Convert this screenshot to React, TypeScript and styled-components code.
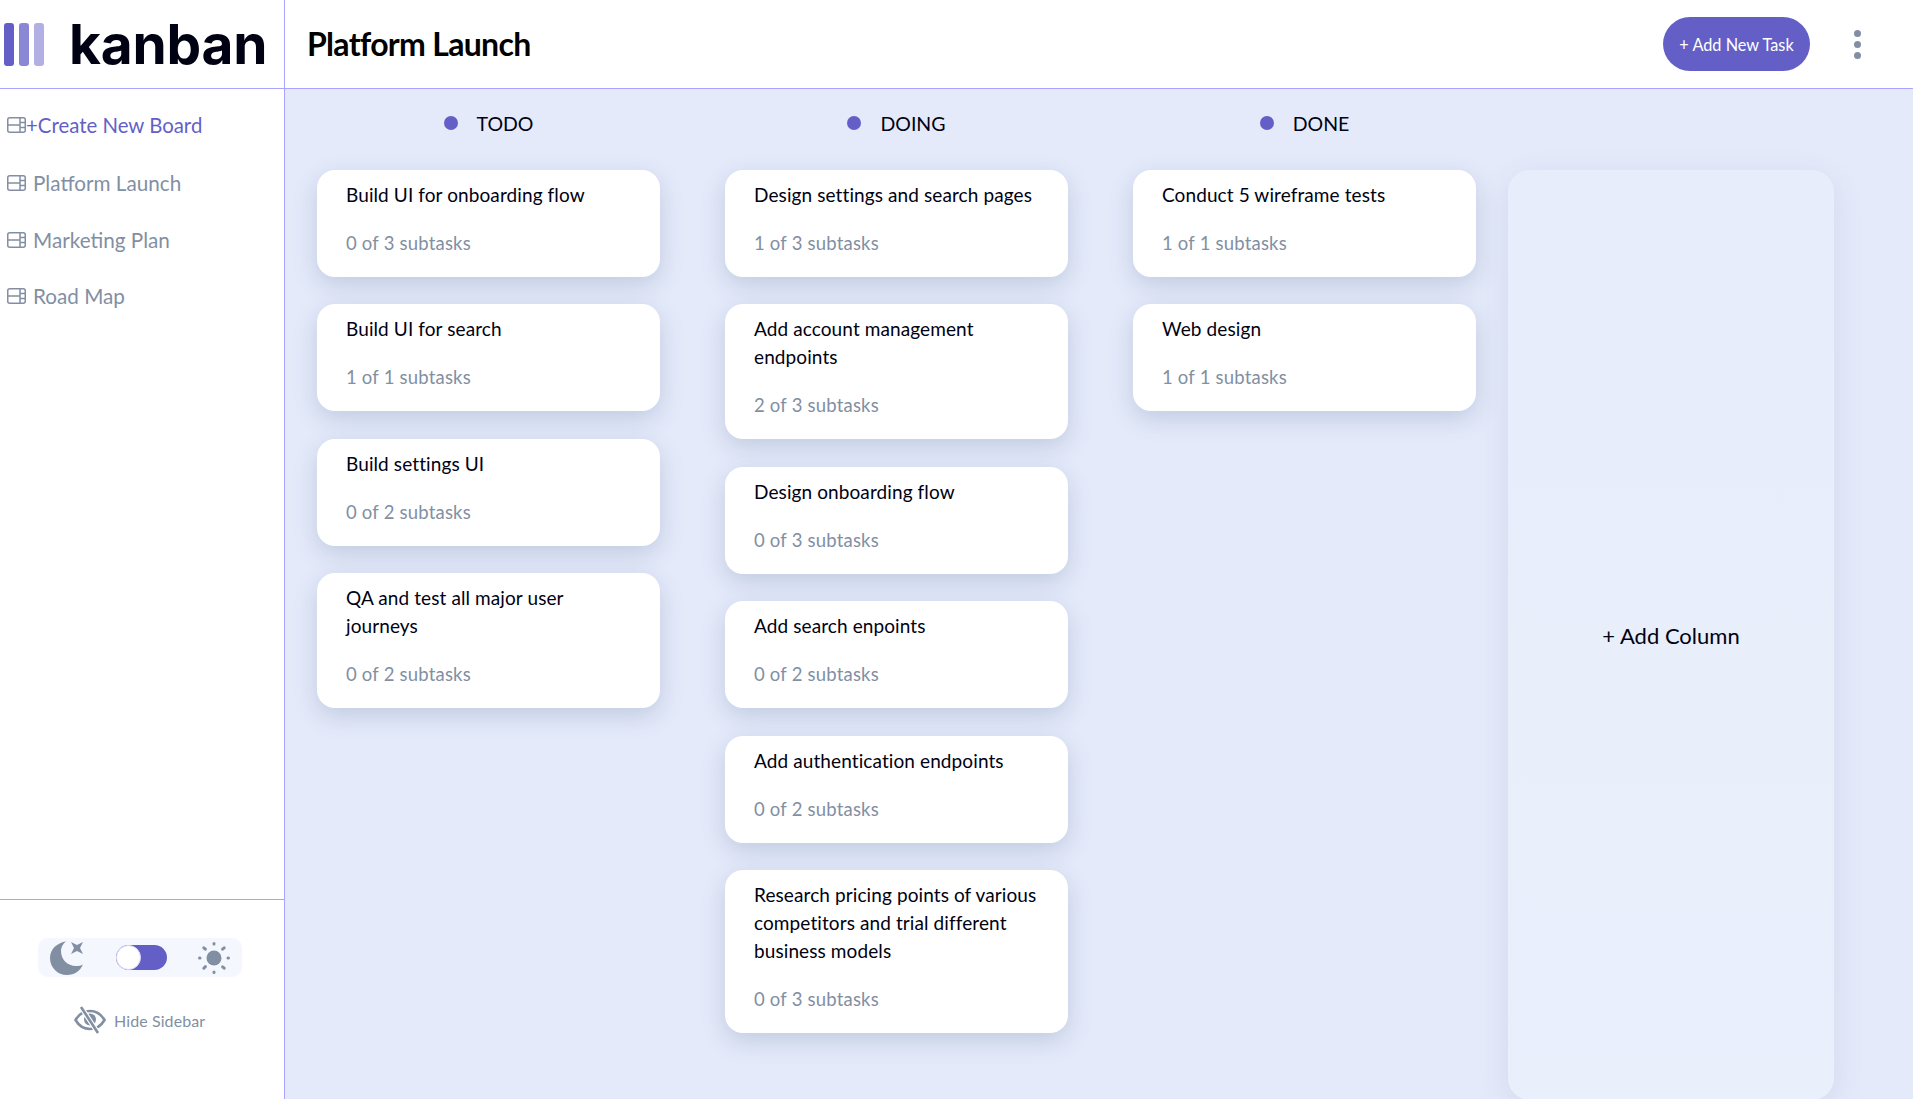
import React from "react";
import styled, { createGlobalStyle } from "styled-components";

const Global = createGlobalStyle`
  html, body { margin: 0; padding: 0; height: 100%; }
  body { font-family: "Lato", "Liberation Sans", sans-serif; color: #000112; background: #e4eafa; }
  * { box-sizing: border-box; }
`;

const Shell = styled.div`
  display: flex;
  flex-direction: column;
  height: 100vh;
  overflow: hidden;
`;
const TopBar = styled.header`
  display: flex;
  flex: 0 0 89px;
  background: #fff;
  border-bottom: 1px solid #a8a4ff;
`;
const LogoCell = styled.div`
  flex: 0 0 285px;
  display: flex;
  align-items: center;
  gap: 25px;
  padding-left: 4px;
  border-right: 1px solid #a8a4ff;
`;
const LogoBars = styled.div`
  display: flex;
  gap: 5px;
`;
const LogoBar = styled.span<{ $o: number }>`
  width: 10px;
  height: 43px;
  border-radius: 3px;
  background: #635fc7;
  opacity: ${(p) => p.$o};
`;
const LogoText = styled.span`
  font-family: "Inter", sans-serif;
  font-weight: 700;
  font-size: 55px;
  line-height: 1;
  letter-spacing: -0.2px;
  color: #000112;
`;
const TitleBar = styled.div`
  flex: 1;
  display: flex;
  align-items: center;
  padding: 0 52px 0 22px;
`;
const Title = styled.h1`
  flex: 1;
  margin: 0 0 2px;
  font-size: 32px;
  font-weight: 700;
  letter-spacing: -0.7px;
  color: #000;
`;
const AddTask = styled.button`
  width: 147px;
  height: 54px;
  padding: 0;
  border: 0;
  border-radius: 27px;
  background: #635fc7;
  color: #fff;
  font-family: inherit;
  font-size: 16.3px;
  margin-right: 44px;
`;
const Kebab = styled.div`
  display: flex;
  flex-direction: column;
  gap: 4px;
`;
const KebabDot = styled.span`
  width: 7px;
  height: 7px;
  border-radius: 50%;
  background: #828fa3;
`;
const Body = styled.div`
  flex: 1;
  display: flex;
  min-height: 0;
`;
const Sidebar = styled.aside`
  flex: 0 0 285px;
  display: flex;
  flex-direction: column;
  background: #fff;
  border-right: 1px solid #a8a4ff;
`;
const Nav = styled.nav`
  flex: 1;
  display: flex;
  flex-direction: column;
  gap: 27.6px;
  padding: 21.5px 0 0 7px;
`;
const NavItem = styled.div<{ $active?: boolean }>`
  display: flex;
  align-items: center;
  height: 29px;
  gap: ${(p) => (p.$active ? "0" : "7px")};
  margin-bottom: ${(p) => (p.$active ? "1.5px" : "0")};
  font-size: ${(p) => (p.$active ? "20.4px" : "20.7px")};
  color: ${(p) => (p.$active ? "#635fc7" : "#828fa3")};
`;
const SideFoot = styled.div`
  flex: 0 0 200px;
  border-top: 1px solid #a8a4ff;
  padding: 38px 0 0 38px;
`;
const ThemePanel = styled.div`
  width: 204px;
  height: 39px;
  display: flex;
  align-items: center;
  border-radius: 10px;
  background: #f4f7fd;
  padding-left: 12px;
`;
const Toggle = styled.div`
  width: 51px;
  height: 25px;
  margin: 0 30px 0 28px;
  border-radius: 13px;
  background: #635fc7;
`;
const Knob = styled.div`
  width: 25px;
  height: 25px;
  border-radius: 50%;
  background: #fff;
  border: 1px solid #dcdcf5;
`;
const HideRow = styled.div`
  display: flex;
  align-items: center;
  gap: 8px;
  margin: 29px 0 0 36px;
  font-size: 16px;
  letter-spacing: 0.1px;
  color: #828fa3;
`;
const Board = styled.main`
  flex: 1;
  display: flex;
  gap: 32px;
  padding-left: 32px;
  background: #e4eafa;
`;
const Columns = styled.div`
  display: flex;
  gap: 65px;
`;
const Column = styled.section`
  width: 343px;
  display: flex;
  flex-direction: column;
`;
const ColumnHead = styled.div`
  height: 68px;
  margin-bottom: 12.9px;
  display: flex;
  align-items: center;
  justify-content: center;
  gap: 19px;
  font-size: 19.5px;
  color: #000112;
`;
const Dot = styled.span`
  width: 14px;
  height: 14px;
  border-radius: 50%;
  background: #635fc7;
`;
const Cards = styled.div`
  display: flex;
  flex-direction: column;
  gap: 27.5px;
`;
const Card = styled.article`
  padding: 11px 24px 20px 29px;
  border-radius: 18px;
  background: #fff;
  box-shadow: 0 8px 24px rgba(54, 78, 126, 0.2);
`;
const CardTitle = styled.div`
  font-size: 19px;
  line-height: 28px;
  letter-spacing: 0.1px;
  color: #000112;
`;
const CardSub = styled.div`
  margin-top: 20px;
  font-size: 18.5px;
  line-height: 28px;
  letter-spacing: 0.2px;
  color: #828fa3;
`;
const AddColumn = styled.div`
  width: 326px;
  height: 930px;
  margin-top: 81px;
  display: flex;
  align-items: center;
  justify-content: center;
  border-radius: 22px;
  background: linear-gradient(180deg, #e7edfa, #e9effb);
  box-shadow: 0 8px 32px rgba(54, 78, 126, 0.1);
  font-size: 22px;
  color: #000112;
`;

const BoardIcon = () => (
  <svg width="19" height="16" viewBox="0 0 19 16" fill="none" stroke="#828fa3" strokeWidth="1.5">
    <rect x="0.75" y="0.75" width="17.5" height="14.5" rx="2" />
    <path d="M0.75 8h12.5M13 .75v14.5M13 5.5h5.25M13 10.5h5.25" />
  </svg>
);
const Moon = () => (
  <svg width="38" height="34" viewBox="0 0 38 34" fill="#828fa3">
    <path d="M16 0.5C8 1.5 0 7.5 0 17c0 9.5 7.5 17 17 17 7.5 0 13-4 16-10.5-2 1-4.5 1.500-7 1.500-8.500 0-15-6.500-15-15 0-3.500 1.500-7 5-9.500z" />
    <path d="M21 1l6 3 6-3-3 6 3 6-6-3-6 3 3-6z" />
  </svg>
);
const Sun = () => (
  <svg width="34" height="34" viewBox="0 0 34 34" fill="#828fa3" stroke="#828fa3">
    <circle cx="17" cy="17" r="7.5" stroke="none" />
    <g strokeWidth="3" strokeLinecap="round">
      <path d="M17 2.5v.5M17 31v.5M2.500 17H3M31 17h.5M6.800 6.800l1.600 1.400M25.600 25.800l1.600 1.400M6.800 27.200l1.600-1.600M25.600 8.200l1.600-1.400" />
    </g>
  </svg>
);
const EyeOff = () => (
  <svg width="32" height="28" viewBox="0 0 32 28" fill="none" stroke="#828fa3">
    <path d="M1.500 14C5 8 10 5 16 5s11 3 14.500 9C27 20 22 23 16 23S5 20 1.500 14z" strokeWidth="2.600" />
    <circle cx="16" cy="13.500" r="6" fill="#828fa3" stroke="none" />
    <path d="M7 1l17 26" stroke="#fff" strokeWidth="5" />
    <path d="M7 1l17 26" strokeWidth="2.600" />
  </svg>
);

const data: { name: string; tasks: [string, string][] }[] = [
  {
    name: "TODO",
    tasks: [
      ["Build UI for onboarding flow", "0 of 3 subtasks"],
      ["Build UI for search", "1 of 1 subtasks"],
      ["Build settings UI", "0 of 2 subtasks"],
      ["QA and test all major user journeys", "0 of 2 subtasks"],
    ],
  },
  {
    name: "DOING",
    tasks: [
      ["Design settings and search pages", "1 of 3 subtasks"],
      ["Add account management endpoints", "2 of 3 subtasks"],
      ["Design onboarding flow", "0 of 3 subtasks"],
      ["Add search enpoints", "0 of 2 subtasks"],
      ["Add authentication endpoints", "0 of 2 subtasks"],
      ["Research pricing points of various competitors and trial different business models", "0 of 3 subtasks"],
    ],
  },
  {
    name: "DONE",
    tasks: [
      ["Conduct 5 wireframe tests", "1 of 1 subtasks"],
      ["Web design", "1 of 1 subtasks"],
    ],
  },
];

export default function App() {
  return (
    <Shell>
      <Global />
      <TopBar>
        <LogoCell>
          <LogoBars>
            <LogoBar $o={1} />
            <LogoBar $o={0.75} />
            <LogoBar $o={0.5} />
          </LogoBars>
          <LogoText>kanban</LogoText>
        </LogoCell>
        <TitleBar>
          <Title>Platform Launch</Title>
          <AddTask>+ Add New Task</AddTask>
          <Kebab>
            <KebabDot />
            <KebabDot />
            <KebabDot />
          </Kebab>
        </TitleBar>
      </TopBar>
      <Body>
        <Sidebar>
          <Nav>
            <NavItem $active>
              <BoardIcon />
              +Create New Board
            </NavItem>
            {["Platform Launch", "Marketing Plan", "Road Map"].map((b) => (
              <NavItem key={b}>
                <BoardIcon />
                {b}
              </NavItem>
            ))}
          </Nav>
          <SideFoot>
            <ThemePanel>
              <Moon />
              <Toggle>
                <Knob />
              </Toggle>
              <Sun />
            </ThemePanel>
            <HideRow>
              <EyeOff />
              Hide Sidebar
            </HideRow>
          </SideFoot>
        </Sidebar>
        <Board>
          <Columns>
            {data.map((c) => (
              <Column key={c.name}>
                <ColumnHead>
                  <Dot />
                  {c.name}
                </ColumnHead>
                <Cards>
                  {c.tasks.map(([t, s]) => (
                    <Card key={t}>
                      <CardTitle>{t}</CardTitle>
                      <CardSub>{s}</CardSub>
                    </Card>
                  ))}
                </Cards>
              </Column>
            ))}
          </Columns>
          <AddColumn>+ Add Column</AddColumn>
        </Board>
      </Body>
    </Shell>
  );
}
